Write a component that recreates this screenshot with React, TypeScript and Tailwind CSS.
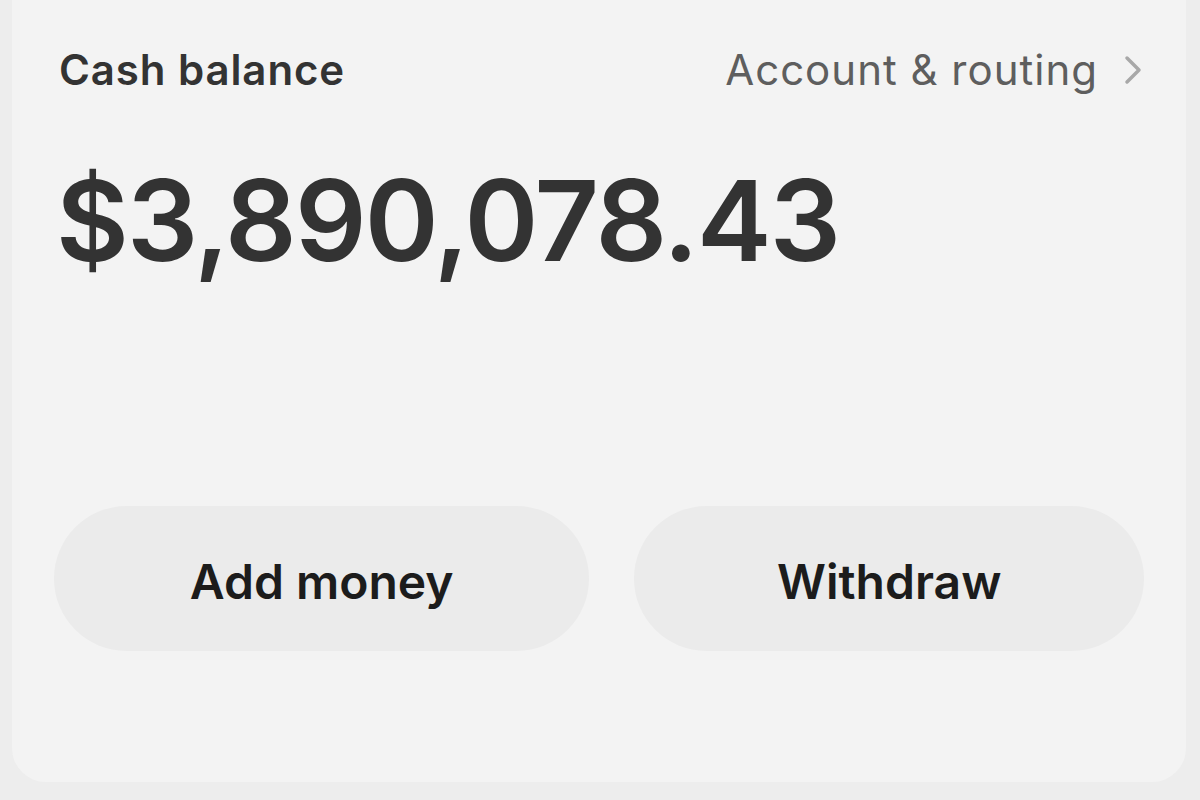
import React from "react";

export default function App() {
  return (
    <div className="w-[1200px] h-[800px] bg-[#ededed] overflow-hidden" style={{ fontFamily: "Inter, 'Noto Sans', sans-serif" }}>
      <div className="ml-[12px] mr-[14px] h-[782px] bg-[#f3f3f3] rounded-b-[34px] px-[42px] flex flex-col">
        <div className="flex items-center justify-between pt-[44px] pl-[5px] pr-[2px]">
          <div className="text-[42px] font-semibold text-[#333333] leading-[52px] tracking-[0.9px]">Cash balance</div>
          <div className="flex items-center gap-[26px] text-[#5e5e5e]">
            <span className="text-[42px] leading-[52px] font-normal tracking-[1px]">Account &amp; routing</span>
            <svg width="18" height="30" viewBox="0 0 18 30" fill="none" stroke="#a8a8a8" strokeWidth="3.5" strokeLinecap="round" strokeLinejoin="round">
              <path d="M3 3 L15 15 L3 27" />
            </svg>
          </div>
        </div>
        <div className="pl-[2px] mt-[64px] text-[112px] font-semibold text-[#333333] leading-[120px] tracking-[-1.8px]">$3,890,078.43</div>
        <div className="mt-[226px] flex gap-[45px]">
          <button className="w-[536px] h-[145px] rounded-full bg-[#ebebeb] text-[48px] font-semibold text-[#1c1c1c] pt-[6px]">Add money</button>
          <button className="w-[510px] h-[145px] rounded-full bg-[#ebebeb] text-[48px] font-semibold text-[#1c1c1c] pt-[6px]">Withdraw</button>
        </div>
      </div>
    </div>
  );
}
